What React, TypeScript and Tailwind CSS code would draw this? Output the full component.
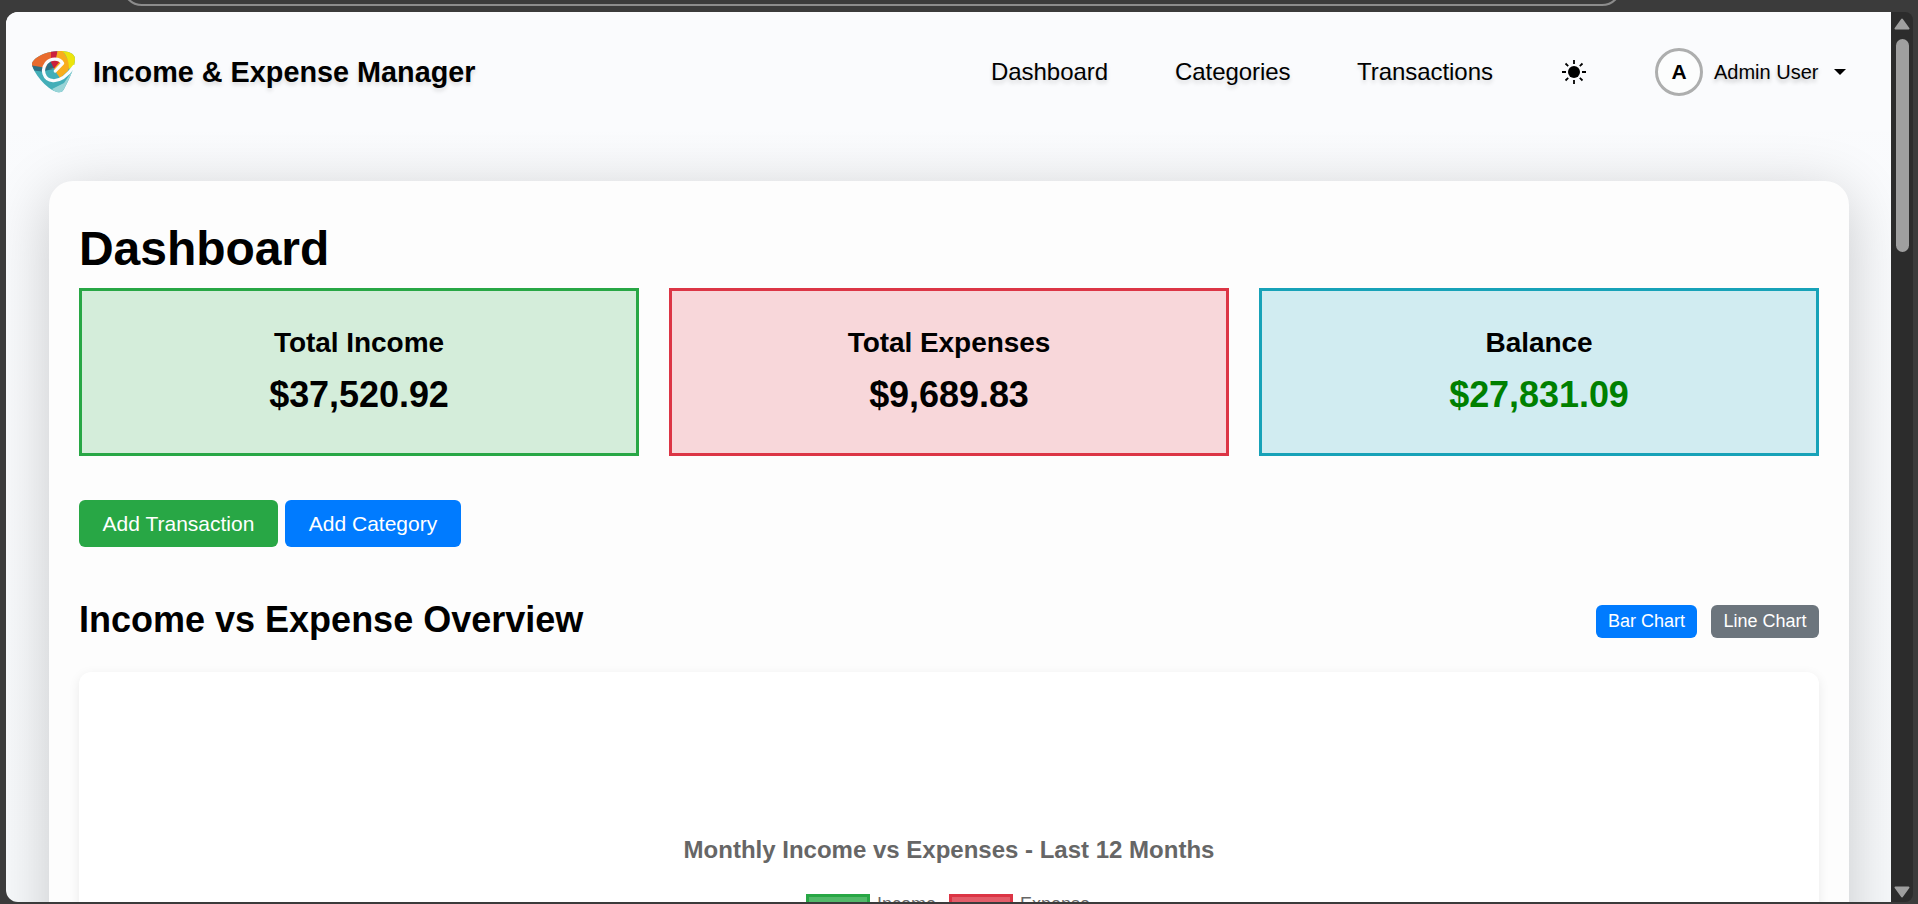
import React from "react";

const navItems = [
  { label: "Dashboard", className: "w-[184px]" },
  { label: "Categories", className: "w-[182px]" },
  { label: "Transactions", className: "w-[205px]" },
];

const stats = [
  { label: "Total Income", value: "$37,520.92", box: "border-[#28a745] bg-[#d4edda]", text: "text-black" },
  { label: "Total Expenses", value: "$9,689.83", box: "border-[#dc3545] bg-[#f8d7da]", text: "text-black" },
  { label: "Balance", value: "$27,831.09", box: "border-[#17a2b8] bg-[#d1ecf1]", text: "text-[#008000]" },
];

const series = [
  { label: "Income", swatch: "border-[#28a745] bg-[#53b96a]", className: "mr-[13px]" },
  { label: "Expense", swatch: "border-[#dc3545] bg-[#e35d6a]", className: "" },
];

function Logo() {
  return (
    <svg className="h-[42px] w-[43px] shrink-0" viewBox="0 0 43 42">
      <defs>
        <clipPath id="shield">
          <path d="M0 13.5C0 8 11 0.5 27 0C37 0 43 2.5 43 8C43 15 38 27 33 36C31 41 28.5 42 25 41C14 38 1 21 0 13.5Z" />
        </clipPath>
      </defs>
      <g clipPath="url(#shield)">
        <rect width="43" height="42" fill="#43aeb8" />
        <path d="M0 0H20V18L0 16Z" fill="#e96b2d" />
        <path d="M0 14.5L21 18L10 20.5L2 19.5Z" fill="#2d6f83" />
        <path d="M19 0H25.5L23 18L19 8Z" fill="#cc203b" />
        <path d="M25.5 0H31L38 12L36 20L28 27L22 18Z" fill="#f8ad1d" />
        <path d="M30 0H43V15L37 18C37 9 34 3 30 0Z" fill="#ece40d" />
        <path d="M43 16L32 32L20 38L24 42H40Z" fill="#98d4d7" />
      </g>
      <path d="M14 17A8.5 8.5 0 0 1 20 9.5L22 17L13.5 18.5Z" fill="#2d6f83" />
      <path d="M18.5 10.5Q23 9 27.5 11L22 17.5Z" fill="#cc203b" />
      <path d="M24.5 22L31.5 15L37 17L28.5 26.5Z" fill="#f8ad1d" />
      <path
        d="M23.3 20L30.6 12.3C27.5 6.5 18.5 7 14.3 12C9 18.5 11.5 29 21 29.7C29 30.2 35.5 24.5 42 15.5"
        fill="none"
        stroke="#fbfcfe"
        strokeWidth="3.2"
        strokeLinecap="round"
        strokeLinejoin="round"
      />
    </svg>
  );
}

function Sun() {
  return (
    <svg className="size-6" viewBox="0 0 24 24" fill="none" stroke="#000" strokeWidth="1.8">
      <circle cx="12" cy="12" r="6" fill="#000" stroke="none" />
      <path d="M12 0V4M12 20V24M0 12H4M20 12H24M3.5 3.5L6.2 6.2M17.8 17.8L20.5 20.5M3.5 20.5L6.2 17.8M17.8 6.2L20.5 3.5" />
    </svg>
  );
}

function Header() {
  return (
    <header className="relative z-10 flex h-[119px] shrink-0 items-center bg-[#fafbfd] pl-[26px] text-black">
      <Logo />
      <div className="ml-[18px] text-[28.8px] leading-[34px] font-bold [text-shadow:0_3px_4px_rgba(0,0,0,0.12)]">
        Income &amp; Expense Manager
      </div>
      <nav className="ml-auto flex items-center text-[24px] leading-9 tracking-[-0.05px] [text-shadow:0_3px_4px_rgba(0,0,0,0.15)]">
        {navItems.map((item) => (
          <a key={item.label} className={item.className}>
            {item.label}
          </a>
        ))}
      </nav>
      <Sun />
      <div className="ml-[69px] flex w-[236px] items-center">
        <div className="flex size-12 items-center justify-center rounded-full border-[3px] border-[#adaeae] bg-[#fcfdfd] text-[21px] font-bold">
          A
        </div>
        <span className="ml-[11px] text-[20px] leading-6 [text-shadow:0_3px_4px_rgba(0,0,0,0.25)]">Admin User</span>
        <svg className="ml-4 h-[6px] w-3" viewBox="0 0 12 6">
          <path d="M0 0H12L6 6Z" />
        </svg>
      </div>
    </header>
  );
}

function StatCards() {
  return (
    <div className="grid grid-cols-3 gap-[30px]">
      {stats.map((s) => (
        <div key={s.label} className={`h-[168px] border-[3px] pt-[35px] text-center font-bold ${s.box}`}>
          <div className="text-[28px] leading-[34px] tracking-[-0.05px] text-black">{s.label}</div>
          <div className={`mt-[14px] text-[36px] leading-[42px] tracking-[-0.05px] ${s.text}`}>{s.value}</div>
        </div>
      ))}
    </div>
  );
}

function ChartPanel() {
  return (
    <div className="mt-[34px] flex h-[600px] flex-col items-center rounded-xl bg-white pt-[163px] text-[#666] shadow-[0_3px_12px_rgba(0,0,0,0.08)]">
      <div className="text-[24px] leading-[30px] font-bold">Monthly Income vs Expenses - Last 12 Months</div>
      <div className="mt-[29px] mr-[2px] flex text-[18px] leading-5">
        {series.map((s) => (
          <div key={s.label} className={`flex ${s.className}`}>
            <span className={`mr-[7px] h-[18px] w-[64px] border-[3px] ${s.swatch}`} />
            {s.label}
          </div>
        ))}
      </div>
    </div>
  );
}

function Scrollbar() {
  return (
    <div className="flex h-[890px] w-[22px] flex-col items-center rounded-r-lg bg-[#2c2c2c]">
      <svg className="mt-[6px] h-3 w-4" viewBox="0 0 16 12">
        <path d="M8 1.5L14.5 10.5H1.5Z" fill="#9f9f9f" stroke="#9f9f9f" strokeWidth="2" strokeLinejoin="round" />
      </svg>
      <div className="mt-[9px] h-[213px] w-[13px] rounded-full bg-[#9f9f9f]" />
      <svg className="mt-auto mb-1 h-3 w-4" viewBox="0 0 16 12">
        <path d="M8 10.5L14.5 1.5H1.5Z" fill="#9f9f9f" stroke="#9f9f9f" strokeWidth="2" strokeLinejoin="round" />
      </svg>
    </div>
  );
}

export default function App() {
  return (
    <div className="flex h-[904px] w-[1918px] flex-col overflow-hidden bg-[#3b3b3b] font-['Liberation_Sans',Arial,sans-serif]">
      <div className="h-3 shrink-0 overflow-hidden">
        <div className="-mt-10 ml-[122px] h-[46px] w-[1500px] rounded-[20px] border-2 border-[#8c8c8c]" />
      </div>
      <div className="flex pl-[6px]">
        <main className="flex h-[890px] w-[1885px] flex-col overflow-hidden rounded-l-xl bg-linear-to-b from-[#fafbfd] to-[#f7f9fb]">
          <Header />
          <section className="mt-[50px] ml-[43px] h-[1200px] w-[1800px] shrink-0 rounded-[24px] bg-[#fdfdfd] px-[30px] pt-[39px] shadow-[0_12px_60px_rgba(0,0,0,0.2)]">
            <h1 className="mb-[10px] text-[48px] leading-[58px] font-bold tracking-[-0.05px] text-black">Dashboard</h1>
            <StatCards />
            <div className="mt-[44px] flex gap-[7px] text-[21px] text-white">
              <button className="h-[47px] w-[199px] rounded-md bg-[#28a745]">Add Transaction</button>
              <button className="h-[47px] w-[176px] rounded-md bg-[#007bff]">Add Category</button>
            </div>
            <div className="mt-[51px] flex h-10 items-end">
              <h2 className="mr-auto -mb-[3px] text-[36px] leading-[42px] font-bold text-black">
                Income vs Expense Overview
              </h2>
              <div className="flex gap-[14px] text-[18px] text-white">
                <button className="h-[33px] w-[101px] rounded-md bg-[#007bff] pb-px">Bar Chart</button>
                <button className="h-[33px] w-[108px] rounded-md bg-[#6c757d] pb-px">Line Chart</button>
              </div>
            </div>
            <ChartPanel />
          </section>
        </main>
        <Scrollbar />
      </div>
    </div>
  );
}
